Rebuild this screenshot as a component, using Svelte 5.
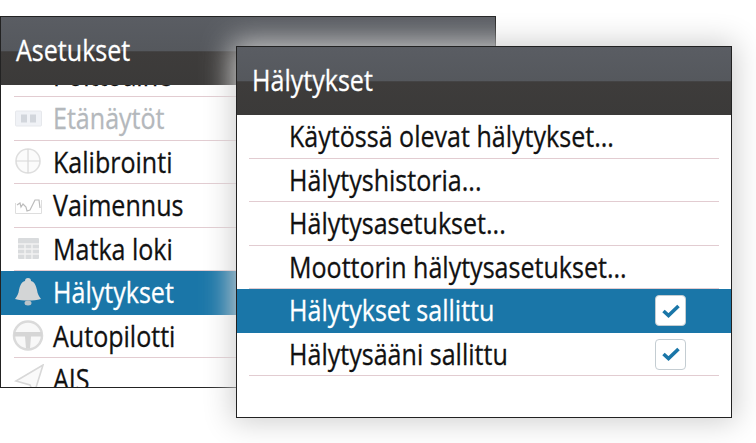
<script>
  const backItems = [
    { label: 'Polttoaine', icon: 'fuel' },
    { label: 'Etänäytöt', icon: 'remote', dim: true },
    { label: 'Kalibrointi', icon: 'compass' },
    { label: 'Vaimennus', icon: 'damping' },
    { label: 'Matka loki', icon: 'log' },
    { label: 'Hälytykset', icon: 'bell', active: true },
    { label: 'Autopilotti', icon: 'wheel' },
    { label: 'AIS', icon: 'ais' }
  ];

  const frontItems = [
    { label: 'Käytössä olevat hälytykset...' },
    { label: 'Hälytyshistoria...' },
    { label: 'Hälytysasetukset...' },
    { label: 'Moottorin hälytysasetukset...' },
    { label: 'Hälytykset sallittu', active: true, check: true },
    { label: 'Hälytysääni sallittu', check: true }
  ];
</script>

<div class="stage">
  <section class="window back">
    <header class="title"><span class="label">Asetukset</span></header>
    <ul class="list">
      {#each backItems as item}
        <li class="row" class:active={item.active} class:dim={item.dim}>
          <span class="icon">
            <svg width="32" height="32" viewBox="0 0 32 32" fill="none">
              {#if item.icon === 'fuel' || item.icon === 'remote'}
                <rect x="3.5" y="8" width="26" height="15" rx="1" fill="#f0f2f6" stroke="#e6e8ec" />
                <rect x="9" y="11.500" width="6" height="8" fill="#d2d6dc" />
                <rect x="18" y="11.500" width="6" height="8" fill="#d2d6dc" />
              {:else if item.icon === 'log'}
                <rect x="6" y="5" width="21" height="21" rx="1" fill="#d9dbdd" />
                <path d="M6 11h21M6 16h21M6 21h21M13 11v15M20 11v15" stroke="#f2f2f2" stroke-width="1.400" />
              {:else if item.icon === 'compass'}
                <circle cx="16" cy="15" r="12" stroke="#dedede" stroke-width="1.600" fill="#fbfbfb" />
                <path d="M4 15h24M16 3v24" stroke="#d8d8d8" stroke-width="1.200" />
              {:else if item.icon === 'damping'}
                <path d="M3.500 13v10.500h26V10" stroke="#dedede" />
                <path d="M5 15l3-2 1 4 2-3 3 3 1 4 3-1 5-10 4 0 1 8" stroke="#bcbcbc" stroke-width="1.200" />
              {:else if item.icon === 'bell'}
                <path d="M16 1c2 0 3 1 3 3 4 1 5 5 6 9 .5 4 2 6 4 9-8 2-18 2-26 0 2-3 3.500-5 4-9 1-4 2-8 6-9 0-2 1-3 3-3z" fill="#d3d5d6" />
                <ellipse cx="16" cy="26" rx="3.500" ry="2.500" fill="#b9c3c9" />
              {:else if item.icon === 'wheel'}
                <circle cx="16" cy="15.500" r="14" stroke="#dadada" stroke-width="2.500" fill="#f8f8f8" />
                <path d="M2 12h28v4.500H19l-1 12h-4l-1-12H2z" fill="#d6d6d6" />
              {:else}
                <path d="M4 17L31 1 22 30l-4-9z" stroke="#d8d8d8" stroke-width="1.600" fill="#fafafa" />
              {/if}
            </svg>
          </span>
          <span class="label">{item.label}</span>
        </li>
      {/each}
    </ul>
  </section>

  <section class="window front">
    <header class="title"><span class="label">Hälytykset</span></header>
    <ul class="list">
      {#each frontItems as item}
        <li class="row" class:active={item.active}>
          <span class="label">{item.label}</span>
          {#if item.check}
            <span class="check">
              <svg width="20" height="16" viewBox="0 0 20 16" fill="none">
                <path d="M2.500 8l5 4.500L17.500 3" stroke="#1a76a8" stroke-width="3.600" />
              </svg>
            </span>
          {/if}
        </li>
      {/each}
    </ul>
  </section>
</div>

<style>
:global(body) {
  margin: 0;
  background: #fff;
}

.stage {
  position: relative;
  width: 756px;
  height: 443px;
  overflow: hidden;
  font-family: "Open Sans", sans-serif;
}

.window {
  position: absolute;
  box-sizing: border-box;
  width: 496px;
  height: 372px;
  background: #fff;
  border: 1.5px solid #222;
  display: flex;
  flex-direction: column;
}

.back {
  left: 0;
  top: 16px;
}

.front {
  left: 236px;
  top: 46px;
  box-shadow: 0 0 28px 4px #cfcfcf;
}

.title {
  flex: none;
  box-sizing: border-box;
  height: 68px;
  padding: 12px 0 0 15px;
  color: #fff;
  font-size: 30px;
  background: linear-gradient(#5a5d63, #55585d 50%, #3e3c3b 51%, #3b3a39);
}

.list {
  list-style: none;
  margin: 0;
  padding: 0;
  flex: 1;
  min-height: 0;
  overflow: hidden;
}

.row {
  position: relative;
  box-sizing: border-box;
  height: 43.5px;
  display: flex;
  align-items: center;
  font-size: 30px;
  color: #111;
  white-space: nowrap;
}

.row::after {
  content: "";
  position: absolute;
  bottom: 0;
  height: 1px;
  background: #e2ccd1;
}

.row.active {
  background: #1a76a8;
  color: #fff;
}

.row.active::after {
  display: none;
}

.back .row {
  padding-left: 11px;
}

.back .row::after {
  left: 13px;
  right: 13px;
}

.back .row.dim {
  color: #b4b8bc;
}

.back .row:first-child {
  margin-top: -31.5px;
}

.icon {
  width: 32px;
  height: 32px;
  margin-right: 9px;
  flex: none;
}

.front .row {
  padding-left: 52px;
}

.front .row::after {
  left: 12px;
  right: 12px;
}

/* no semi-condensed face installed, so narrow the regular one */
.label {
  display: inline-block;
  transform: scaleX(0.835);
  transform-origin: left center;
  -webkit-text-stroke: 0.3px currentColor;
}

.row .label {
  padding-bottom: 2px;
}

.check {
  box-sizing: border-box;
  width: 31px;
  height: 31px;
  margin-left: auto;
  margin-right: 45px;
  display: flex;
  align-items: center;
  justify-content: center;
  background: #fff;
  border: 1.5px solid #c4cdd2;
  border-radius: 4px;
}
</style>
